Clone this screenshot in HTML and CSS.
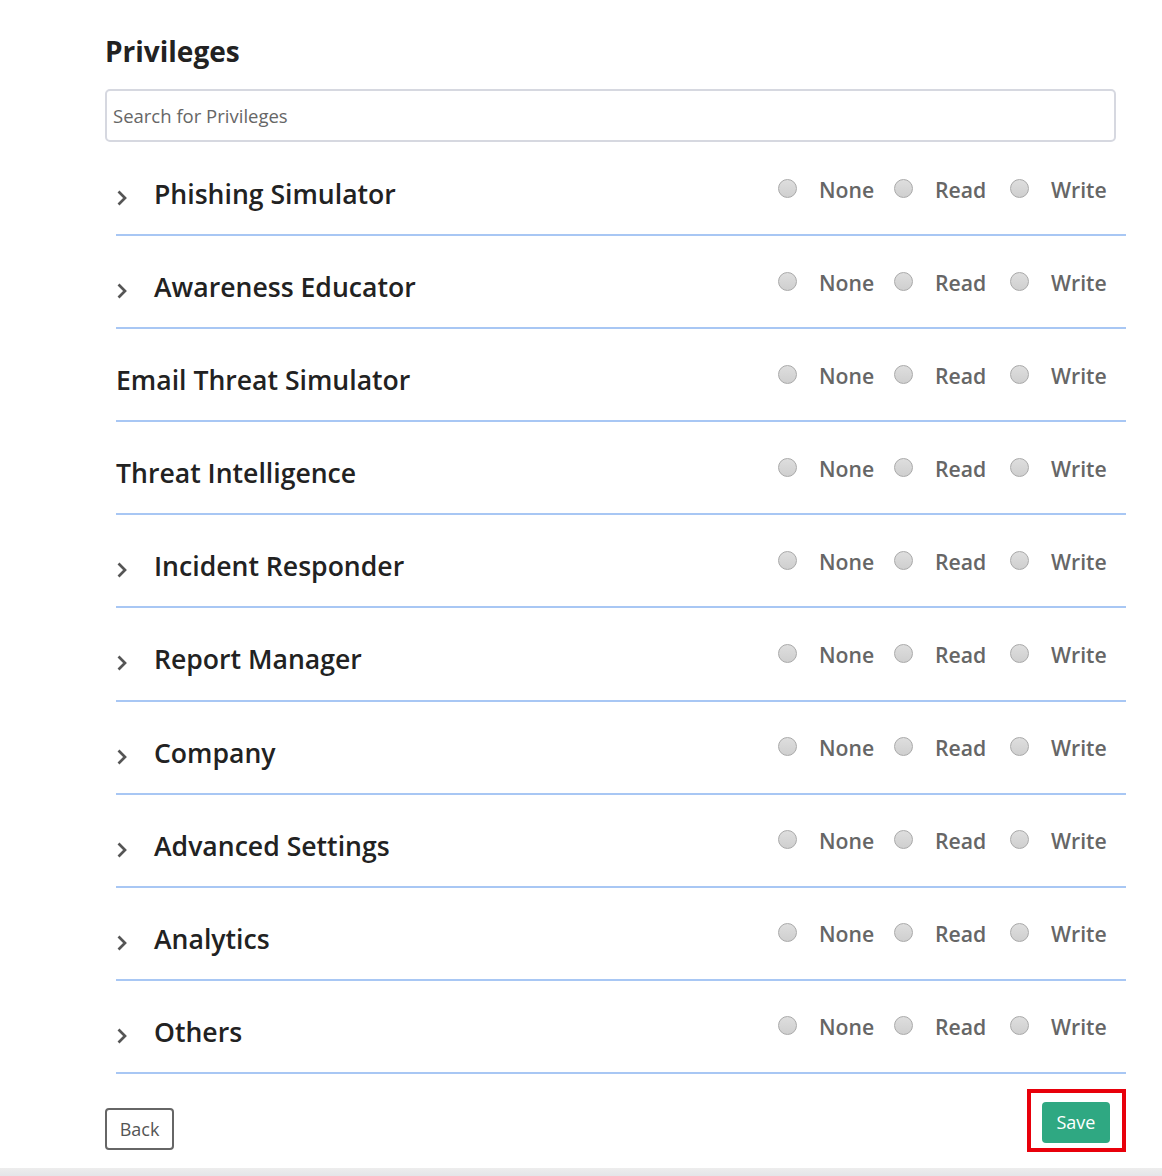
FILE: index.html
```html
<!DOCTYPE html>
<html lang="en">
<head>
<meta charset="utf-8">
<title>Privileges</title>
<link rel="stylesheet" href="styles.css">
</head>
<body>
<div class="page">
  <h1 class="title">Privileges</h1>
  <input class="search" type="text" placeholder="Search for Privileges">
  <div class="rows">
    <div class="row">
      <div class="row-title"><svg class="chev" width="12" height="18" viewBox="0 0 12 18"><path d="M2.5 2.5 L9 9 L2.5 15.5" fill="none" stroke="#555" stroke-width="2.7"/></svg><span>Phishing Simulator</span></div>
      <div class="opts"><span class="opt"><i class="radio"></i>None</span><span class="opt"><i class="radio"></i>Read</span><span class="opt"><i class="radio"></i>Write</span></div>
    </div>
    <div class="row">
      <div class="row-title"><svg class="chev" width="12" height="18" viewBox="0 0 12 18"><path d="M2.5 2.5 L9 9 L2.5 15.5" fill="none" stroke="#555" stroke-width="2.7"/></svg><span>Awareness Educator</span></div>
      <div class="opts"><span class="opt"><i class="radio"></i>None</span><span class="opt"><i class="radio"></i>Read</span><span class="opt"><i class="radio"></i>Write</span></div>
    </div>
    <div class="row">
      <div class="row-title"><span>Email Threat Simulator</span></div>
      <div class="opts"><span class="opt"><i class="radio"></i>None</span><span class="opt"><i class="radio"></i>Read</span><span class="opt"><i class="radio"></i>Write</span></div>
    </div>
    <div class="row">
      <div class="row-title"><span>Threat Intelligence</span></div>
      <div class="opts"><span class="opt"><i class="radio"></i>None</span><span class="opt"><i class="radio"></i>Read</span><span class="opt"><i class="radio"></i>Write</span></div>
    </div>
    <div class="row">
      <div class="row-title"><svg class="chev" width="12" height="18" viewBox="0 0 12 18"><path d="M2.5 2.5 L9 9 L2.5 15.5" fill="none" stroke="#555" stroke-width="2.7"/></svg><span>Incident Responder</span></div>
      <div class="opts"><span class="opt"><i class="radio"></i>None</span><span class="opt"><i class="radio"></i>Read</span><span class="opt"><i class="radio"></i>Write</span></div>
    </div>
    <div class="row">
      <div class="row-title"><svg class="chev" width="12" height="18" viewBox="0 0 12 18"><path d="M2.5 2.5 L9 9 L2.5 15.5" fill="none" stroke="#555" stroke-width="2.7"/></svg><span>Report Manager</span></div>
      <div class="opts"><span class="opt"><i class="radio"></i>None</span><span class="opt"><i class="radio"></i>Read</span><span class="opt"><i class="radio"></i>Write</span></div>
    </div>
    <div class="row">
      <div class="row-title"><svg class="chev" width="12" height="18" viewBox="0 0 12 18"><path d="M2.5 2.5 L9 9 L2.5 15.5" fill="none" stroke="#555" stroke-width="2.7"/></svg><span>Company</span></div>
      <div class="opts"><span class="opt"><i class="radio"></i>None</span><span class="opt"><i class="radio"></i>Read</span><span class="opt"><i class="radio"></i>Write</span></div>
    </div>
    <div class="row">
      <div class="row-title"><svg class="chev" width="12" height="18" viewBox="0 0 12 18"><path d="M2.5 2.5 L9 9 L2.5 15.5" fill="none" stroke="#555" stroke-width="2.7"/></svg><span>Advanced Settings</span></div>
      <div class="opts"><span class="opt"><i class="radio"></i>None</span><span class="opt"><i class="radio"></i>Read</span><span class="opt"><i class="radio"></i>Write</span></div>
    </div>
    <div class="row">
      <div class="row-title"><svg class="chev" width="12" height="18" viewBox="0 0 12 18"><path d="M2.5 2.5 L9 9 L2.5 15.5" fill="none" stroke="#555" stroke-width="2.7"/></svg><span>Analytics</span></div>
      <div class="opts"><span class="opt"><i class="radio"></i>None</span><span class="opt"><i class="radio"></i>Read</span><span class="opt"><i class="radio"></i>Write</span></div>
    </div>
    <div class="row">
      <div class="row-title"><svg class="chev" width="12" height="18" viewBox="0 0 12 18"><path d="M2.5 2.5 L9 9 L2.5 15.5" fill="none" stroke="#555" stroke-width="2.7"/></svg><span>Others</span></div>
      <div class="opts"><span class="opt"><i class="radio"></i>None</span><span class="opt"><i class="radio"></i>Read</span><span class="opt"><i class="radio"></i>Write</span></div>
    </div>
  </div>
  <div class="footer">
    <button class="btn-back">Back</button>
    <div class="highlight"><button class="btn-save">Save</button></div>
  </div>
</div>
<div class="bottom-bar"></div>
</body>
</html>
```

FILE: styles.css
```css
html, body {
  margin: 0;
  padding: 0;
  background: #fff;
}
body {
  font-family: "Open Sans", "DejaVu Sans", sans-serif;
  color: #222;
  height: 1176px;
  overflow: hidden;
  display: flex;
  flex-direction: column;
}
.page {
  margin-left: 105px;
  width: 1010px;
  padding-top: 32px;
  flex: 1;
}
.title {
  margin: 0;
  font-size: 28px;
  line-height: 38px;
  font-weight: 700;
  color: #222;
}
.search {
  display: block;
  box-sizing: border-box;
  margin-top: 19px;
  width: 1011px;
  height: 53px;
  border: 2px solid #d6d8e0;
  border-radius: 5px;
  padding: 0 0 0 6px;
  font-family: "Open Sans", sans-serif;
  font-size: 18.5px;
  color: #333;
  outline: none;
}
.search::placeholder {
  color: #666;
}
.rows {
  margin-left: 11px;
  padding-top: 1px;
  width: 1010px;
}
.row {
  display: flex;
  justify-content: space-between;
  align-items: flex-start;
  height: 91.1px;
  border-bottom: 2px solid #a8c7f4;
  box-sizing: content-box;
}
.row-title {
  display: flex;
  align-items: center;
  padding-top: 33px;
  height: 36px;
  font-size: 26.6px;
  font-weight: 600;
  color: #222;
}
.chev {
  margin: 8px 26px 0 0;
}
.opts {
  display: flex;
  padding-top: 28px;
  width: 348px;
}
.opt {
  display: flex;
  align-items: center;
  width: 116px;
  height: 36px;
  font-size: 21.2px;
  font-weight: 600;
  color: #666;
}
.radio {
  display: block;
  box-sizing: border-box;
  width: 19px;
  height: 19px;
  border-radius: 50%;
  border: 1px solid #a9a9a9;
  background: linear-gradient(#dedede, #cfcfcf);
  margin: -2px 22px 0 0;
}
.footer {
  display: flex;
  justify-content: space-between;
  align-items: flex-start;
  width: 1021px;
  margin-top: 15px;
}
.btn-back {
  margin-top: 19px;
  width: 69px;
  height: 42px;
  box-sizing: border-box;
  border: 2px solid #666;
  border-radius: 4px;
  background: #fff;
  font-family: "Open Sans", sans-serif;
  font-size: 18px;
  color: #555;
  padding: 0;
}
.highlight {
  border: 4px solid #e8000b;
  padding: 9px 12px 5px 11px;
}
.btn-save {
  display: block;
  width: 68px;
  height: 41px;
  border: none;
  border-radius: 4px;
  background: #2fa882;
  color: #fff;
  font-family: "Open Sans", sans-serif;
  font-size: 18px;
  padding: 0;
}
.bottom-bar {
  height: 8px;
  background: linear-gradient(#ededed, #e4e5e8);
}
```
